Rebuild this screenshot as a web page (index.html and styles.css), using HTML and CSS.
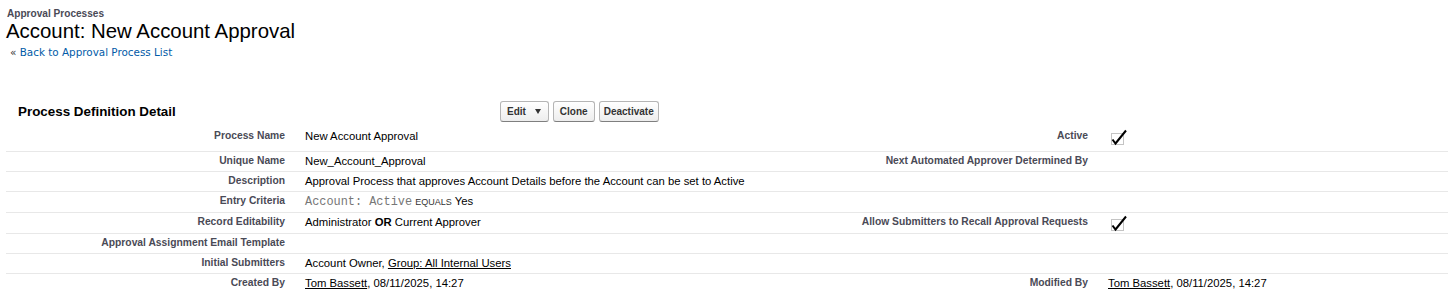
FILE: index.html
```html
<!DOCTYPE html>
<html lang="en">

<head>
  <meta charset="UTF-8">
  <title>Approval Process: New Account Approval</title>
  <link rel="stylesheet" href="styles.css">
</head>

<body>

  <!-- Page title -->
  <div class="page-title">
    <h2 class="page-type">Approval Processes</h2>
    <h1 class="page-name">Account: New Account Approval</h1>
    <div class="breadcrumb">&laquo;&nbsp;<a href="#">Back to Approval Process List</a></div>
  </div>

  <!-- Detail block -->
  <div class="detail-block">
    <div class="block-header">
      <h3 class="block-title">Process Definition Detail</h3>
      <div class="block-buttons">
        <button class="btn btn-menu">Edit <span class="caret"></span></button>
        <button class="btn">Clone</button>
        <button class="btn">Deactivate</button>
      </div>
    </div>

    <div class="detail-list">
      <div class="detail-row first">
        <div class="label-col">Process Name</div>
        <div class="data-col">New Account Approval</div>
        <div class="label-col">Active</div>
        <div class="data-col"><span class="checkbox"><svg width="20" height="17" viewBox="0 0 20 17"><rect x="1.5" y="4.5" width="12" height="11" fill="none" stroke="#888" stroke-dasharray="1 1"/><path d="M2.5 10.5 L5.5 14.5 L16 1.5" fill="none" stroke="#000" stroke-width="2"/></svg></span></div>
      </div>
      <div class="detail-row">
        <div class="label-col">Unique Name</div>
        <div class="data-col">New_Account_Approval</div>
        <div class="label-col">Next Automated Approver Determined By</div>
        <div class="data-col"></div>
      </div>
      <div class="detail-row">
        <div class="label-col">Description</div>
        <div class="data-col">Approval Process that approves Account Details before the Account can be set to Active</div>
        <div class="label-col"></div>
        <div class="data-col"></div>
      </div>
      <div class="detail-row">
        <div class="label-col">Entry Criteria</div>
        <div class="data-col"><span class="criteria-field">Account: Active</span> <span class="criteria-op">equals</span> Yes</div>
        <div class="label-col"></div>
        <div class="data-col"></div>
      </div>
      <div class="detail-row tall">
        <div class="label-col">Record Editability</div>
        <div class="data-col">Administrator <b>OR</b> Current Approver</div>
        <div class="label-col">Allow Submitters to Recall Approval Requests</div>
        <div class="data-col"><span class="checkbox"><svg width="20" height="17" viewBox="0 0 20 17"><rect x="1.5" y="4.5" width="12" height="11" fill="none" stroke="#888" stroke-dasharray="1 1"/><path d="M2.5 10.5 L5.5 14.5 L16 1.5" fill="none" stroke="#000" stroke-width="2"/></svg></span></div>
      </div>
      <div class="detail-row">
        <div class="label-col">Approval Assignment Email Template</div>
        <div class="data-col"></div>
        <div class="label-col"></div>
        <div class="data-col"></div>
      </div>
      <div class="detail-row">
        <div class="label-col">Initial Submitters</div>
        <div class="data-col">Account Owner, <a href="#">Group: All Internal Users</a></div>
        <div class="label-col"></div>
        <div class="data-col"></div>
      </div>
      <div class="detail-row last">
        <div class="label-col">Created By</div>
        <div class="data-col"><a href="#">Tom Bassett</a>, 08/11/2025, 14:27</div>
        <div class="label-col">Modified By</div>
        <div class="data-col"><a href="#">Tom Bassett</a>, 08/11/2025, 14:27</div>
      </div>
    </div>
  </div>

</body>

</html>
```

FILE: styles.css
```css
* {
  margin: 0;
  padding: 0;
  box-sizing: border-box;
}

body {
  background-color: #fff;
  font-family: "Liberation Sans", Arial, sans-serif;
  font-size: 11.3px;
  color: #000;
}

/* Page title */
.page-title {
  padding: 8px 0 0 6px;
}

.page-type {
  font-size: 10.1px;
  line-height: 12px;
  font-weight: bold;
  color: #4a4a56;
  padding-left: 1px;
}

.page-name {
  font-size: 20.4px;
  line-height: 22px;
  font-weight: normal;
  color: #000;
}

.breadcrumb {
  margin-top: 3px;
  padding-left: 4px;
  font-family: "DejaVu Sans", Verdana, sans-serif;
  font-size: 10.4px;
  line-height: 14px;
  color: #333;
}

.breadcrumb a {
  color: #015ba7;
  text-decoration: none;
}

/* Detail block */
.detail-block {
  margin-top: 39px;
  padding-left: 6px;
}

.block-header {
  display: flex;
  align-items: center;
  height: 26px;
}

.block-title {
  width: 494px;
  padding-left: 12px;
  font-size: 13.4px;
  font-weight: bold;
  color: #000;
}

.block-buttons {
  display: flex;
  gap: 4px;
}

.btn {
  min-width: 42px;
  height: 21px;
  padding: 0 4px;
  font-family: "Liberation Sans", Arial, sans-serif;
  font-size: 10px;
  font-weight: bold;
  color: #333;
  border: 1px solid #b5b5b5;
  border-bottom-color: #7f7f7f;
  border-radius: 3px;
  background: linear-gradient(#fff, #ededed);
  cursor: pointer;
}

.btn-menu {
  padding: 0 7px 0 6px;
}

.caret {
  display: inline-block;
  margin-left: 6px;
  width: 0;
  height: 0;
  border-left: 3.5px solid transparent;
  border-right: 3.5px solid transparent;
  border-top: 5px solid #333;
  vertical-align: 1px;
}

/* Detail rows */
.detail-list {
  margin-top: 2px;
}

.detail-row {
  display: grid;
  grid-template-columns: 289px 543px 260px 1fr;
  border-bottom: 1px solid #e8e8e8;
}

.detail-row.last {
  border-bottom: none;
}

.label-col,
.data-col {
  padding: 2px 0 3px;
  line-height: 14px;
}

.detail-row.first .label-col,
.detail-row.first .data-col {
  padding-top: 3px;
  padding-bottom: 8px;
}

.detail-row.tall .label-col,
.detail-row.tall .data-col {
  padding-bottom: 4px;
}

.label-col {
  padding-right: 10px;
  text-align: right;
  font-size: 10.3px;
  font-weight: bold;
  color: #4a4a56;
}

.data-col {
  padding-left: 10px;
}

.data-col a {
  color: #000;
  text-decoration: underline;
}

.checkbox {
  display: inline-block;
  position: relative;
  width: 20px;
  height: 14px;
  vertical-align: top;
}

.checkbox svg {
  position: absolute;
  left: 2px;
  top: 0;
}

.criteria-field {
  font-family: "Liberation Mono", "Courier New", monospace;
  font-size: 11.9px;
  color: #777;
}

.criteria-op {
  font-size: 9px;
  text-transform: uppercase;
  color: #333;
}
```
